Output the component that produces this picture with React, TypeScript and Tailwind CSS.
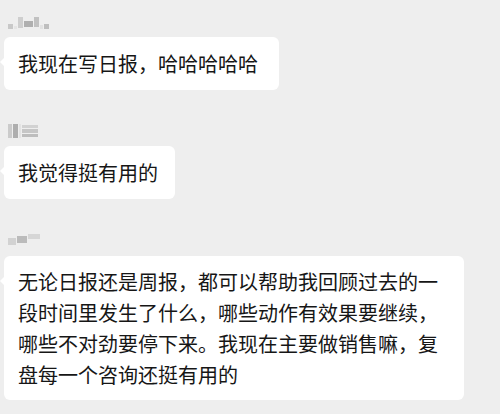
import React from "react";

type Msg = {
    name: number;
    lines: string[];
    width: string;
    tall?: boolean;
};

function BlurName({ kind }: { kind: number }) {
    // names are pixelated in the screenshot, so draw soft gray blocks in a row
    if (kind === 0) {
        return (
            <div className="flex h-[12px] items-end gap-[1px] opacity-90 blur-[0.6px]">
                <div className="h-[5px] w-[5px] bg-[#c4c4c4]" />
                <div className="h-[3px] w-[3px] bg-[#e4e4e4]" />
                <div className="h-[11px] w-[5px] self-start bg-[#cbcbcb]" />
                <div className="mb-[2px] h-[6px] w-[9px] bg-[#a9a9a9]" />
                <div className="h-[10px] w-[5px] self-start bg-[#bdbdbd]" />
                <div className="h-[4px] w-[3px] bg-[#e0e0e0]" />
                <div className="h-[5px] w-[5px] bg-[#b9b9b9]" />
            </div>
        );
    }
    if (kind === 1) {
        return (
            <div className="flex h-[14px] items-stretch gap-[1px] opacity-90 blur-[0.6px]">
                <div className="w-[4px] bg-[#c8c8c8]" />
                <div className="w-[5px] bg-[#a8a8a8]" />
                <div className="w-[2px] bg-[#e2e2e2]" />
                <div className="flex w-[16px] flex-col justify-between py-[1px]">
                    <div className="h-[3px] bg-[#cfcfcf]" />
                    <div className="h-[4px] bg-[#c2c2c2]" />
                    <div className="h-[3px] bg-[#b8b8b8]" />
                </div>
            </div>
        );
    }
    return (
        <div className="flex h-[12px] items-center gap-[1px] opacity-90 blur-[0.6px]">
            <div className="mt-[4px] h-[7px] w-[8px] bg-[#cfcfcf]" />
            <div className="h-[7px] w-[10px] bg-[#b6b6b6]" />
            <div className="mb-[5px] h-[5px] w-[12px] bg-[#d4d4d4]" />
        </div>
    );
}

function Bubble({ lines, width, tall }: { lines: string[]; width: string; tall?: boolean }) {
    return (
        <div className={"relative rounded-[6px] bg-white px-[14px] " + (tall ? "py-[10px] " : "py-[12px] ") + width}>
            <div className="absolute left-[-4px] top-[20px] h-0 w-0 border-y-[5px] border-r-[5px] border-y-transparent border-r-white" />
            <p className={"text-[20px] text-[#161616] " + (tall ? "leading-[31px]" : "leading-[29px]")}>
                {lines.map((l, i) => (
                    <React.Fragment key={i}>
                        {l}
                        {i < lines.length - 1 && <br />}
                    </React.Fragment>
                ))}
            </p>
        </div>
    );
}

export default function App() {
    const msgs: Msg[] = [
        { name: 0, lines: ["我现在写日报，哈哈哈哈哈"], width: "w-[275px]" },
        { name: 1, lines: ["我觉得挺有用的"], width: "w-[171px]" },
        {
            name: 2,
            lines: [
                "无论日报还是周报，都可以帮助我回顾过去的一",
                "段时间里发生了什么，哪些动作有效果要继续，",
                "哪些不对劲要停下来。我现在主要做销售嘛，复",
                "盘每一个咨询还挺有用的",
            ],
            width: "w-[460px]",
            tall: true,
        },
    ];

    return (
        <div
            className="h-[414px] w-[500px] overflow-hidden bg-[#eeeeee] pl-[4px] pt-[17px]"
            style={{ fontFamily: '"Noto Sans CJK SC", "Noto Sans", sans-serif' }}
        >
            <div className="flex flex-col">
                {msgs.map((m, i) => (
                    <div
                        key={i}
                        className={"flex flex-col " + (i === 0 ? "gap-[8px]" : i === 1 ? "mt-[34px] gap-[8px]" : "mt-[34px] gap-[11px]")}
                    >
                        <div className="pl-[4px]">
                            <BlurName kind={m.name} />
                        </div>
                        <Bubble lines={m.lines} width={m.width} tall={m.tall} />
                    </div>
                ))}
            </div>
        </div>
    );
}
